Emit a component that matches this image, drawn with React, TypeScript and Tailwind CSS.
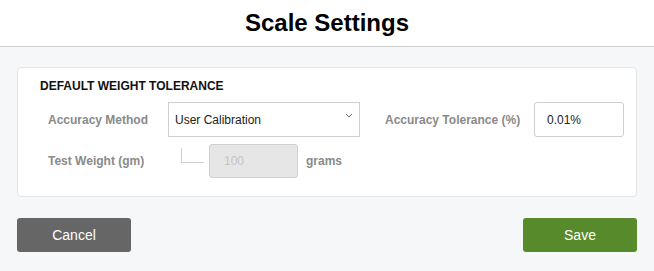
export default function App() {
  return (
    <div className="min-h-[271px] bg-[#f6f7f9] font-['Liberation_Sans',Arial,sans-serif]">
      <header className="flex h-[47px] items-center justify-center border-b border-[#cfcfcf] bg-white">
        <h1 className="text-[24px] leading-none font-bold text-black">Scale Settings</h1>
      </header>

      <div className="px-[17px] pt-[20px]">
        <section className="rounded-[4px] border border-[#e2e4e6] bg-white pl-[22px] pt-[11px] pb-[18px]">
          <h2 className="text-[12px] leading-[14px] font-bold text-[#111]">DEFAULT WEIGHT TOLERANCE</h2>

          <div className="mt-[9px] flex items-center pl-[8px]">
            <label className="w-[120px] text-[12px] font-bold text-[#8a8a8a]">Accuracy Method</label>
            <div className="relative flex h-[35px] w-[192px] items-center border border-[#cfcfcf] bg-white pl-[6px] text-[12px] text-[#222]">
              User Calibration
              <svg
                className="absolute right-[6px] top-[10px]"
                width="8"
                height="5"
                viewBox="0 0 8 5"
                fill="none"
                stroke="#666"
                strokeWidth="1"
              >
                <path d="M1 1l3 3 3-3" />
              </svg>
            </div>
            <label className="ml-[25px] w-[149px] text-[12px] font-bold text-[#8a8a8a]">
              Accuracy Tolerance (%)
            </label>
            <div className="flex h-[35px] w-[90px] items-center rounded-[3px] border border-[#cfcfcf] bg-white pl-[12px] text-[12px] text-[#222]">
              0.01%
            </div>
          </div>

          <div className="mt-[7px] flex items-center pl-[8px]">
            <label className="w-[133px] text-[12px] font-bold text-[#8a8a8a]">Test Weight (gm)</label>
            <div className="mb-[3px] h-[15px] w-[23px] self-start mt-[4px] border-b border-l border-[#cfcfcf]" />
            <div className="ml-[5px] flex h-[34px] w-[89px] items-center rounded-[3px] border border-[#d0d0d0] bg-[#e6e6e6] pl-[14px] text-[12px] text-[#c4c4c4]">
              100
            </div>
            <span className="ml-[8px] text-[12px] font-bold text-[#8a8a8a]">grams</span>
          </div>
        </section>

        <div className="mt-[21px] flex justify-between">
          <button className="h-[34px] w-[114px] rounded-[3px] bg-[#666666] text-[14px] text-white">Cancel</button>
          <button className="h-[34px] w-[114px] rounded-[3px] bg-[#578a2b] text-[14px] text-white">Save</button>
        </div>
      </div>
    </div>
  );
}
